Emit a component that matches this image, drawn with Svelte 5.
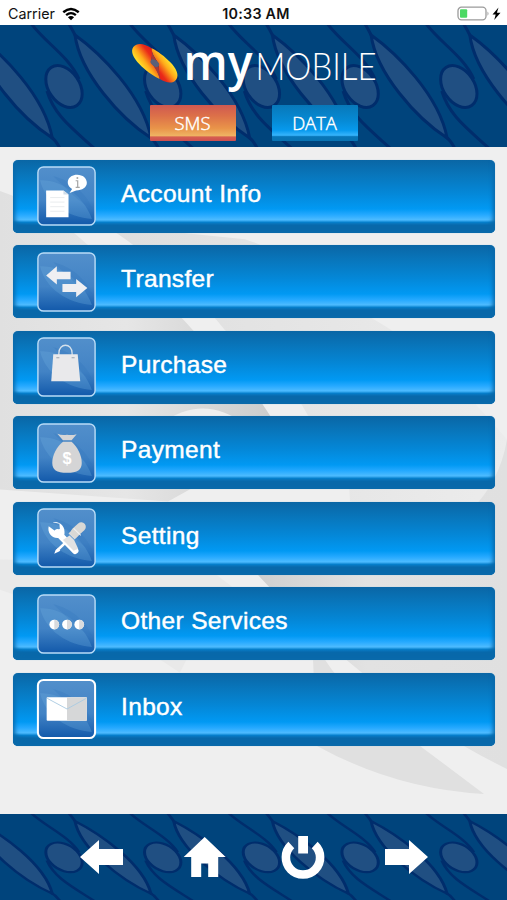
<script lang="ts">
	type Mode = 'SMS' | 'DATA';

	const modes: Mode[] = ['SMS', 'DATA'];
	const tiles = [-1, 0, 1, 2, 3, 4, 5];

	const menu = [
		{ id: 'account', label: 'Account Info' },
		{ id: 'transfer', label: 'Transfer' },
		{ id: 'purchase', label: 'Purchase' },
		{ id: 'payment', label: 'Payment' },
		{ id: 'setting', label: 'Setting' },
		{ id: 'other', label: 'Other Services' },
		{ id: 'inbox', label: 'Inbox' }
	];

	let mode = $state<Mode>('SMS');
	let selected = $state('');
</script>

{#snippet songket()}
	<svg class="pattern" viewBox="0 0 507 122" preserveAspectRatio="none" aria-hidden="true">
		{#each tiles as tile}
			<g transform="translate({tile * 98.7} 0)" stroke="#002d6c" stroke-width="3" stroke-linejoin="round">
				<path d="M30 -3 C44 17 68 30 79 54" fill="none" />
				<path d="M67 -4 C71 2 73 6 75 10" fill="none" />
				<path d="M47 66 C54 90 72 103 95 124" fill="none" />
				<path d="M150 112 C154 115 157 120 159 124" fill="none" />
				<path d="M75 10 C100 28 143 70 151 113 C120 93 80 48 75 10Z" fill="#204f82" />
				<ellipse cx="64" cy="61.500" rx="15.500" ry="23" transform="rotate(-34 64 61.500)" fill="#204f82" />
			</g>
		{/each}
	</svg>
{/snippet}

<div class="screen">
	<div class="status-bar">
		<div class="status-left">
			<span>Carrier</span>
			<svg width="18" height="14" viewBox="0 0 17 13" aria-hidden="true">
				<path d="M1.200 4.800 Q8.500 -1.400 15.800 4.800" fill="none" stroke="#000" stroke-width="2.300" />
				<path d="M3.900 7.600 Q8.500 3.700 13.100 7.600" fill="none" stroke="#000" stroke-width="2.200" />
				<path d="M5.600 9.600 Q8.500 7.200 11.400 9.600 L8.500 12.500Z" />
			</svg>
		</div>
		<span class="clock">10:33 AM</span>
		<svg class="battery" width="45" height="16" viewBox="0 0 45 16" aria-hidden="true">
			<rect x="1" y="1.200" width="28" height="12.600" rx="3.500" fill="#fff" stroke="#9b9b9b" stroke-width="1.300" />
			<rect x="3" y="3.200" width="7.200" height="8.600" rx="1" fill="#4cd964" />
			<path d="M30.500 5.500 Q32.500 7.500 30.500 9.800Z" fill="#9b9b9b" />
			<path d="M41.500 1.500 L35.500 8.500 H38.700 L37.200 14 L43.500 6.800 H39.900Z" />
		</svg>
	</div>

	<header class="header">
		{@render songket()}
		<div class="header-content">
			<svg class="logo" width="250" height="60" viewBox="0 0 250 60" role="img" aria-label="myMOBILE">
				<defs>
					<linearGradient id="flame-lower" gradientUnits="userSpaceOnUse" x1="-12" y1="13" x2="-5" y2="-9">
						<stop offset="0" stop-color="#ffea2e" />
						<stop offset="0.350" stop-color="#ffab1a" />
						<stop offset="0.750" stop-color="#ea2a19" />
						<stop offset="1" stop-color="#dd1c1c" />
					</linearGradient>
					<linearGradient id="flame-upper" gradientUnits="userSpaceOnUse" x1="5" y1="9" x2="12" y2="-13">
						<stop offset="0" stop-color="#dd1c1c" />
						<stop offset="0.250" stop-color="#ea2a19" />
						<stop offset="0.650" stop-color="#ffab1a" />
						<stop offset="1" stop-color="#ffea2e" />
					</linearGradient>
				</defs>
				<g transform="translate(25.800 28.200) rotate(37) scale(0.960 0.880)">
					<path d="M-28 0 C-28 -7 -21 -11 -12 -11.500 C-7 -8 -7 -3 -4 0 C0 4 8 4 14 11 C7 13 -4 13 -12 11.500 C-21 10 -28 6 -28 0Z" fill="url(#flame-lower)" />
					<path d="M28 0 C28 7 22 10 14 11 C8 4 7 2 4 -1 C0 -5 -8 -5 -12 -11.500 C-6 -13 5 -13 12 -11.500 C21 -10 28 -6 28 0Z" fill="url(#flame-upper)" />
					<path d="M-12 -11.500 C-8 -5 0 -5 4 -1 C7 2 8 4 14 11 C8 5 0 4 -4 0 C-7 -3 -8 -7 -12 -11.500Z" fill="#a83a35" />
					<ellipse cx="0" cy="0" rx="5" ry="3.400" fill="#5b6078" />
				</g>
				<text class="logo-my" x="54.500" y="44.500" textLength="69" lengthAdjust="spacingAndGlyphs">my</text>
				<text class="logo-mobile" x="126.500" y="44.500" textLength="121" lengthAdjust="spacingAndGlyphs">MOBILE</text>
			</svg>
			<div class="modes">
				{#each modes as item}
					<button class="mode" class:active={mode === item} onclick={() => (mode = item)}>{item}</button>
				{/each}
			</div>
		</div>
	</header>

	<main class="body">
		<svg class="swoosh" viewBox="0 148 507 666" preserveAspectRatio="none" aria-hidden="true">
			<defs>
				<linearGradient id="sweep-a" x1="0" x2="1">
					<stop offset="0" stop-color="#e0e0e0" />
					<stop offset="0.450" stop-color="#e6e6e6" />
					<stop offset="1" stop-color="#cbcbcb" />
				</linearGradient>
				<linearGradient id="sweep-b" x1="0" x2="1">
					<stop offset="0" stop-color="#dedede" />
					<stop offset="1" stop-color="#ececec" />
				</linearGradient>
				<linearGradient id="sweep-c" x1="0" x2="1">
					<stop offset="0" stop-color="#cfcfcf" />
					<stop offset="0.450" stop-color="#e2e2e2" />
					<stop offset="1" stop-color="#e0e0e0" />
				</linearGradient>
			</defs>
			<path d="M0 192 Q45 207 87 245 Q160 292 193 331 Q245 376 270 416 L280 440 L168 502 L0 490Z" fill="url(#sweep-a)" />
			<path d="M105 226 Q185 280 225 331 Q280 365 308 416 Q350 455 350 502 L507 530 V440 Q430 350 370 318 Q300 258 245 240Z" fill="url(#sweep-b)" />
			<path d="M160 425 Q203 393 245 425 L300 450 V489 H168Z" fill="#efefef" />
			<path d="M0 560 Q120 560 215 574 L232 587 Q190 650 180 673 Q120 630 0 590Z" fill="#e9e9e9" />
			<path d="M253 570 Q305 628 362 673 Q430 732 507 769 V440 Q485 570 253 570Z" fill="url(#sweep-c)" />
			<path d="M313 660 H325 Q350 700 420 746 L484 794 Q395 789 317 746Z" fill="#e0e0e0" />
		</svg>

		<nav class="menu">
			{#each menu as item}
				<button class="row" onclick={() => (selected = item.id)} aria-current={selected === item.id}>
					<svg class="icon" viewBox="0 0 58 59" preserveAspectRatio="none" aria-hidden="true">
						<defs>
							<linearGradient id="tile-{item.id}" x1="0" y1="0" x2="0" y2="1">
								<stop offset="0" stop-color="#528fcb" />
								<stop offset="0.580" stop-color="#4283c5" />
								<stop offset="1" stop-color="#1259aa" />
							</linearGradient>
						</defs>
						<rect
							x="0.900"
							y="0.900"
							width="56.200"
							height="57.200"
							rx="5.500"
							fill="url(#tile-{item.id})"
							stroke={item.id === 'inbox' ? '#fff' : '#b9dcf7'}
							stroke-width={item.id === 'inbox' ? 2 : 1.4}
						/>
						<path d="M3 14 C23 13 45 28 54 52 C31 51 8 36 3 14Z" fill="#6daddf" opacity="0.300" />
						<path d="M16 10 C33 14 48 26 54 41 C42 37 29 22 16 10Z" fill="#2f75ba" opacity="0.250" />
						{#if item.id === 'account'}
							<path d="M9 24 H26 L31 28 V50.500 H9Z" fill="#fff" />
							<path d="M26 24 V28 H31" fill="#cfdce8" />
							<path d="M13 31 H27 M13 35.500 H27 M13 40 H27 M13 44.500 H27" stroke="#e4e7ea" stroke-width="0.800" />
							<path d="M39.500 8.500 C45 8.500 49 12 49 16.500 C49 21 44.500 24 38.500 24 L32 26.500 L34.500 22.500 C27 18 30 8.500 39.500 8.500Z" fill="#fff" />
							<path d="M38 14.500 H40 V21 M38 21 H42" fill="none" stroke="#a6a6a6" stroke-width="1.200" />
							<circle cx="39.700" cy="11.800" r="1" fill="#a6a6a6" />
						{:else if item.id === 'transfer'}
							<path d="M9 23 L19.500 14 V19.300 H33 V26.800 H19.500 V32Z M25 31.500 H38.500 V26.500 L49.500 35.300 L38.500 44.500 V39.300 H25Z" fill="#efeff2" />
						{:else if item.id === 'purchase'}
							<path d="M21.500 21 V16 C21.500 5.500 34.500 5.500 34.500 16 V21" fill="none" stroke="#d4e0eb" stroke-width="1.300" />
							<path d="M16 17 H40 L42.500 43.500 H14Z" fill="#e9e9eb" />
							<path d="M19 20.500 H22 M34 20.500 H37" stroke="#9ba5b0" stroke-width="1" />
						{:else if item.id === 'payment'}
							<path d="M20 10.500 Q24.500 12.500 29.500 11.500 Q34 12.500 39 11 L34 17 H25.500Z" fill="#d5d5d6" />
							<path d="M25.500 18.500 H34 C39.500 23 44 32 44 39 C44 46 40 49 29.500 49 C19 49 15 46 15 39 C15 32 19.500 23 25.500 18.500Z" fill="#d5d5d6" />
							<text class="dollar" x="29.500" y="40" text-anchor="middle">$</text>
						{:else if item.id === 'setting'}
							<path d="M20 24 L37.500 42" stroke="#fff" stroke-width="6.500" stroke-linecap="round" />
							<path d="M15.500 14 L22 15.500 L22.500 20.500 L18.500 23 L11.500 18 C10 24 14 30 21 29.500 L27 26 C28 18 23 13 15.500 14Z" fill="#fff" />
							<path d="M29 33 L19 42.500" stroke="#fff" stroke-width="2.500" />
							<path d="M20.500 39.500 L23 42 L17 45 L18 42Z" fill="#fff" />
							<path d="M25.500 31.500 L32 27 L36.500 31.500 L40.500 40 L36 42Z" fill="#e2e2e2" />
							<path d="M34 28 L38 24" stroke="#dadada" stroke-width="8.500" />
							<path d="M38 23.500 L43.500 18.500" stroke="#d9d8d5" stroke-width="9" stroke-linecap="round" />
							<path d="M36 20 L43 27" stroke="#f1f1f1" stroke-width="1" />
						{:else if item.id === 'other'}
							{#each [17, 29.5, 41.5] as cx}
								<circle {cx} cy="30" r="4.800" fill="#fff" />
								<path d="M{cx} 25.200 A4.800 4.800 0 0 1 {cx} 34.800Z" fill="#d9dbde" />
							{/each}
						{:else}
							<rect x="9.500" y="18" width="39.500" height="23" rx="0.800" fill="#fff" />
							<path d="M29.500 18 H49 V41 H29.500Z" fill="#d6d7d8" />
							<path d="M10 19 L29.500 29.500 L48.500 19" fill="none" stroke="#aacbe1" stroke-width="0.900" />
						{/if}
					</svg>
					<span class="label">{item.label}</span>
				</button>
			{/each}
		</nav>
	</main>

	<footer class="footer">
		{@render songket()}
		<div class="toolbar">
			<button aria-label="Back">
				<svg width="44" height="44" viewBox="0 0 44 44"><path d="M0 22 L19 5 V14 H43 V30 H19 V39Z" /></svg>
			</button>
			<button aria-label="Home">
				<svg width="44" height="44" viewBox="0 0 44 44"><path d="M20.700 2 L41.700 22 H34.200 V42 H24.200 V28.500 H17.200 V42 H7.200 V22 H-0.300Z" /></svg>
			</button>
			<button aria-label="Log out">
				<svg width="44" height="44" viewBox="0 0 44 44">
					<path d="M9.300 10 A17.100 17.100 0 1 0 32.700 10" fill="none" stroke="#fff" stroke-width="8.600" />
					<path d="M16.200 1 H26 V18.500 H16.200Z" />
				</svg>
			</button>
			<button aria-label="Forward">
				<svg width="44" height="44" viewBox="0 0 44 44"><path d="M43 22 L24 5 V14 H0 V30 H24 V39Z" /></svg>
			</button>
		</div>
	</footer>
</div>

<style>
	:global(body) {
		background: #efefef;
	}

	.screen {
		display: flex;
		flex-direction: column;
		width: 507px;
		height: 900px;
		overflow: hidden;
		font-family: 'Liberation Sans', Arial, sans-serif;
	}

	button {
		margin: 0;
		padding: 0;
		border: 0;
		background: none;
		font: inherit;
		color: #fff;
		cursor: pointer;
	}

	svg {
		display: block;
		overflow: visible;
	}

	.status-bar {
		display: grid;
		grid-template-columns: 1fr auto 1fr;
		align-items: center;
		flex: none;
		height: 25px;
		box-sizing: border-box;
		padding: 2px 5px 0 8px;
		background: #fff;
		color: #111;
		font: 400 14.300px Inter, sans-serif;
	}

	.status-left {
		display: flex;
		align-items: center;
		gap: 7px;
	}

	.clock {
		padding-left: 2px;
		font-weight: 600;
		letter-spacing: 0.250px;
	}

	.battery {
		justify-self: end;
	}

	.header,
	.footer,
	.body {
		display: grid;
		flex: none;
		overflow: hidden;
	}

	.header,
	.footer {
		background: #00447c;
	}

	.header {
		height: 122px;
	}

	.footer {
		height: 86px;
	}

	.body {
		height: 667px;
		background: #efefef;
	}

	/* backdrop and content share the same grid cell */
	.pattern,
	.swoosh,
	.header-content,
	.menu,
	.toolbar {
		grid-area: 1 / 1;
	}

	.pattern {
		width: 100%;
		height: 100%;
		min-height: 0;
	}

	.header .pattern {
		height: 122px;
	}

	.footer .pattern {
		height: 86px;
	}

	.swoosh {
		width: 507px;
		height: 667px;
	}

	.header-content {
		z-index: 1;
		display: flex;
		flex-direction: column;
		align-items: center;
		padding-top: 10px;
	}

	.logo-my {
		font: 600 49px 'Open Sans', sans-serif;
		fill: #fff;
	}

	.logo-mobile {
		font: 300 36.500px Lato, sans-serif;
		fill: #fff;
	}

	.modes {
		display: flex;
		gap: 36px;
		margin-top: 10px;
	}

	.mode {
		width: 86px;
		height: 36px;
		padding-bottom: 1px;
		border-radius: 1px;
		background: linear-gradient(#0878b9 0%, #068bd6 45%, #0799ed 70%, #36b4fc 84%, #0876b8 88%, #0873b2 100%);
		font: 300 18.400px 'Open Sans', sans-serif;
		-webkit-text-stroke: 0.450px #fff;
	}

	.mode.active {
		background: linear-gradient(#cf5951 0%, #dc7049 30%, #e99449 65%, #efb362 85%, #d65e50 89%, #cc4e50 100%);
	}

	.menu {
		display: flex;
		flex-direction: column;
		gap: 12.500px;
		padding: 12.500px 12px 0 13px;
	}

	.row {
		display: flex;
		align-items: flex-start;
		gap: 25px;
		height: 73px;
		flex: none;
		box-sizing: border-box;
		padding: 6.500px 24px;
		border-radius: 5px;
		background: linear-gradient(#0a66a5 0%, #0877bd 22%, #0487d7 45%, #0199f3 67%, #25a9ff 75%, #4dbbff 82%, #0782cf 85.500%, #0969ab 90%, #0966a5 100%);
		box-shadow:
			inset 5px -10px 4px -3px #0969aa,
			inset -5px -10px 4px -3px #0969aa,
			0 0 1px #8dbfdd;
		text-align: left;
	}

	.icon {
		flex: none;
		width: 59px;
		height: 60px;
	}

	.dollar {
		font: 700 16px 'Liberation Sans', sans-serif;
		fill: #fff;
	}

	.label {
		padding-top: 12.500px;
		font-size: 24.500px;
		line-height: 30px;
		letter-spacing: 0.350px;
		-webkit-text-stroke: 0.450px #fff;
	}

	.toolbar {
		z-index: 1;
		display: grid;
		grid-template-columns: 104px 97.500px 103.500px 44px;
		align-items: start;
		padding: 21px 0 0 80px;
	}

	.toolbar button {
		width: 44px;
	}

	.toolbar svg {
		fill: #fff;
	}
</style>
